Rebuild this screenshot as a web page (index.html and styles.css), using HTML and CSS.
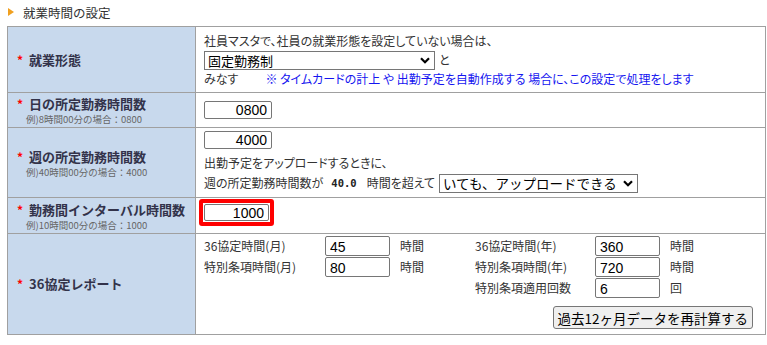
FILE: index.html
```html
<!DOCTYPE html>
<html lang="ja">
<head>
    <meta charset="UTF-8">
    <title>就業時間の設定</title>
    <link rel="stylesheet" href="styles.css">
</head>
<body>
    <h2 class="caption"><span class="tri"></span>就業時間の設定</h2>

    <table class="setting">
        <tr class="row-type">
            <th><span class="req">*</span>就業形態</th>
            <td>
                <div class="text">社員マスタで、社員の就業形態を設定していない場合は、</div>
                <div class="line">
                    <select class="sel-type"><option>固定勤務制</option></select><span>と</span>
                </div>
                <div class="text">みなす<span class="note">※ タイムカードの計上 や 出勤予定を自動作成する 場合に、この設定で処理をします</span></div>
            </td>
        </tr>
        <tr class="row-day">
            <th>
                <div class="label"><span class="req">*</span>日の所定勤務時間数</div>
                <div class="sub">例)8時間00分の場合：0800</div>
            </th>
            <td><input class="num" type="text" value="0800"></td>
        </tr>
        <tr class="row-week">
            <th>
                <div class="label"><span class="req">*</span>週の所定勤務時間数</div>
                <div class="sub">例)40時間00分の場合：4000</div>
            </th>
            <td>
                <input class="num" type="text" value="4000">
                <div class="text gap">出勤予定をアップロードするときに、</div>
                <div class="line">
                    <span>週の所定勤務時間数が</span><b class="hours">40.0</b><span>時間を超えて</span>
                    <select class="sel-upload"><option>いても、アップロードできる</option></select>
                </div>
            </td>
        </tr>
        <tr class="row-interval">
            <th>
                <div class="label"><span class="req">*</span>勤務間インターバル時間数</div>
                <div class="sub">例)10時間00分の場合：1000</div>
            </th>
            <td><div class="alert"><input class="num" type="text" value="1000"></div></td>
        </tr>
        <tr class="row-36">
            <th><span class="req">*</span>36協定レポート</th>
            <td>
                <div class="grid36">
                    <span>36協定時間(月)</span><input type="text" value="45"><span class="unit">時間</span>
                    <span>36協定時間(年)</span><input type="text" value="360"><span class="unit">時間</span>
                    <span>特別条項時間(月)</span><input type="text" value="80"><span class="unit">時間</span>
                    <span>特別条項時間(年)</span><input type="text" value="720"><span class="unit">時間</span>
                    <span></span><span></span><span></span>
                    <span>特別条項適用回数</span><input type="text" value="6"><span class="unit">回</span>
                </div>
                <div class="actions"><button type="button">過去12ヶ月データを再計算する</button></div>
            </td>
        </tr>
    </table>
</body>
</html>
```

FILE: styles.css
```css
body {
    font-family: "Noto Sans CJK JP", "Liberation Sans", sans-serif;
    font-size: 12px;
    color: #333;
    margin: 0;
    padding: 0 2px 0 7px;
    background: #fff;
}
.caption {
    font-size: 12.5px;
    font-weight: normal;
    color: #333;
    margin: 0;
    height: 26px;
    display: flex;
    align-items: center;
    padding-left: 1px;
    box-sizing: border-box;
    padding-bottom: 2px;
}
.tri {
    width: 0;
    height: 0;
    border-top: 4px solid transparent;
    border-bottom: 4px solid transparent;
    border-left: 6px solid #f0a020;
    margin-right: 9px;
}
.setting {
    border-collapse: collapse;
    width: 759px;
}
.setting th, .setting td {
    border: 1px solid #a0a0a0;
    line-height: 16px;
    box-sizing: border-box;
}
.setting th {
    width: 188px;
    background: #c8d9ed;
    text-align: left;
    font-size: 13px;
    color: #33334a;
    padding: 0 0 0 9px;
    font-weight: bold;
}
.setting td {
    padding: 0 8px;
    vertical-align: top;
    font-feature-settings: "palt";
}
.req {
    color: #f00;
    font-size: 12px;
    margin-right: 6px;
}
.label {
    line-height: 19px;
}
.sub {
    font-size: 9.5px;
    font-weight: normal;
    color: #666;
    line-height: 13px;
    padding-left: 9px;
}
.text {
    height: 16px;
    white-space: nowrap;
}
.line {
    display: flex;
    align-items: center;
    gap: 4px;
    white-space: nowrap;
}
select {
    appearance: none;
    font-family: "Noto Sans CJK JP", "Liberation Sans", sans-serif;
    font-size: 13px;
    line-height: 17px;
    height: 19px;
    border: 1px solid #767676;
    border-radius: 0;
    padding: 0 20px 0 3px;
    color: #000;
    background: #fff url("data:image/svg+xml,%3Csvg xmlns='http://www.w3.org/2000/svg' width='10' height='7' viewBox='0 0 10 7'%3E%3Cpath d='M1 1.2l4 4 4-4' fill='none' stroke='%23000' stroke-width='2.2'/%3E%3C/svg%3E") no-repeat right 4px center;
}
.sel-type {
    width: 231px;
}
.sel-upload {
    width: 199px;
    font-size: 13.5px;
}
.note {
    color: #1515f0;
    margin-left: 27px;
}
.row-type td {
    height: 66px;
    padding-top: 6px;
}
.row-type .line {
    height: 20px;
    margin: 1px 0 1px;
}
input {
    display: block;
    font-family: "Liberation Sans", sans-serif;
    border: 1px solid #767676;
    border-radius: 2px;
    padding: 0 4px;
    box-sizing: border-box;
    color: #000;
}
.num {
    width: 68px;
    height: 18px;
    font-size: 14px;
    text-align: right;
}
.row-day td {
    height: 35px;
    padding-top: 8px;
}
.row-week td {
    height: 70px;
    padding-top: 3px;
}
.gap {
    margin-top: 6px;
}
.row-week .line {
    height: 20px;
    margin-top: 2px;
}
.hours {
    font-family: "DejaVu Sans Mono", monospace;
    font-size: 10.5px;
    margin: 0 6px 0 4px;
    color: #222;
}
.row-interval td {
    height: 36px;
    padding-top: 1px;
    padding-left: 3px;
}
.alert {
    width: fit-content;
    border: 4px solid #f00;
    border-radius: 3px;
    padding: 1px;
    background: #fff;
}
.alert .num {
    width: 65px;
    height: 17px;
}
.row-36 td {
    height: 101px;
    padding-top: 2px;
}
.grid36 {
    display: grid;
    grid-template-columns: 121px 65px 85px 120px 65px auto;
    row-gap: 1px;
    align-items: center;
}
.grid36 input {
    width: 65px;
    height: 20px;
    font-size: 14px;
    padding: 2px 4px 0;
}
.unit {
    padding-left: 10px;
}
.actions {
    display: flex;
    justify-content: flex-end;
    margin-top: 8px;
    padding-right: 4px;
}
button {
    font-family: "Noto Sans CJK JP", "Liberation Sans", sans-serif;
    font-size: 13.5px;
    height: 23px;
    line-height: 20px;
    padding: 0 4px;
    border: 1px solid #767676;
    border-radius: 3px;
    background: #efefef;
    color: #000;
}
```
